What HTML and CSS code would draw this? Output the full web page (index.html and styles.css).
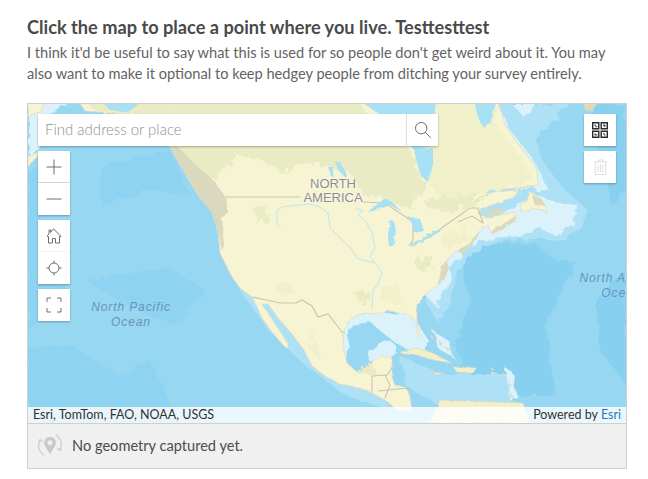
FILE: index.html
```html
<!DOCTYPE html>
<html lang="en">
<head>
<meta charset="utf-8">
<title>Map question</title>
<link rel="stylesheet" href="styles.css">
</head>
<body>
<main class="question">
  <h1 class="title">Click the map to place a point where you live. Testtesttest</h1>
  <p class="desc">I think it'd be useful to say what this is used for so people don't get weird about it. You may also want to make it optional to keep hedgey people from ditching your survey entirely.</p>
  <section class="mapbox">
    <div class="map">
      <svg class="basemap" viewBox="28 104 598 319" preserveAspectRatio="none" aria-hidden="true">
        <defs>
          <filter id="soft" x="-5%" y="-5%" width="110%" height="110%">
            <feTurbulence type="fractalNoise" baseFrequency="0.09" numOctaves="2" seed="4" result="n"/>
            <feDisplacementMap in="SourceGraphic" in2="n" scale="9" result="d"/>
            <feGaussianBlur in="d" stdDeviation="0.7"/>
          </filter>
          <filter id="rough" x="-5%" y="-5%" width="110%" height="110%">
            <feTurbulence type="fractalNoise" baseFrequency="0.2" numOctaves="2" seed="7" result="n"/>
            <feDisplacementMap in="SourceGraphic" in2="n" scale="3" result="d"/>
            <feGaussianBlur in="d" stdDeviation="0.3"/>
          </filter>
          <filter id="mottle" x="-5%" y="-5%" width="110%" height="110%">
            <feTurbulence type="fractalNoise" baseFrequency="0.14" numOctaves="3" seed="11" result="n"/>
            <feDisplacementMap in="SourceGraphic" in2="n" scale="16"/>
          </filter>
        </defs>
        <rect class="ocean" x="28" y="104" width="598" height="319"/>
        <g class="soft">
          <path class="deep-soft" d="M28 170L60 160 40 230 70 300 28 330ZM28 350L70 345 120 375 150 360 180 423H28ZM100 165L170 150 190 195 150 190 100 205ZM85 280L170 268 205 290 175 325 125 305Z"/>
          <path class="deep" d="M458 255L500 243 535 243 552 258 575 262 560 295 545 325 555 395 505 395 470 385 455 345 470 300ZM595 300L626 270V385L600 350ZM590 104H626V190L612 205 600 160Z"/>
          <path class="shelf2" d="M497 104H570L555 120 535 140 545 165 565 190 588 210 580 228 558 242 520 238 496 242 475 252 458 268 450 298 440 325 425 300ZM400 356L440 374 505 374 514 404 440 406 405 385ZM205 190L222 245 240 290 268 330 305 365 345 395 395 412 380 395 330 370 300 340 265 300 235 280 225 250 218 205Z"/>
          <path class="shelf1" d="M28 104H70L42 118 38 150 28 165ZM340 325L355 312 412 314 428 340 425 352 405 348 392 340 370 322 350 325 346 360 342 355ZM517 205L540 196 560 203 577 205 574 225 556 236 540 228 518 236 492 238 470 246 454 260 448 285 436 306 425 295 440 268 470 230Z"/>
          <path class="shelf1" d="M497 104L510 130 530 155 542 175 548 190 535 190 520 150 500 125ZM512 104H535L525 118ZM432 330L448 340 454 358 440 350ZM505 368L512 372 518 398 510 400ZM367 350L390 340 396 346 392 360 370 362Z"/>
        </g>
        <g class="coast rough">
          <path id="land" d="M78 100L85 111 120 114 150 116 160 135 170 147 180 165 192 185 200 198 212 212 218 230 220 253 226 265 232 277 240 288 252 297 256 305 262 318 272 332 284 346 288 349 287 342 276 325 266 310 262 304 268 304 278 318 292 334 304 350 312 366 325 376 340 384 360 388 372 393 385 400 397 410 412 410 409 393 405 387 395 385 392 378 392 358 382 356 373 360 370 370 357 372 347 363 343 347 344 330 348 322 357 315 367 313 380 314 390 311 403 313 413 318 420 332 422 338 417 332 417 305 427 293 438 285 442 267 453 253 467 247 483 228 488 225 490 232 505 225 517 217 514 212 500 215 490 218 478 214 480 209 495 204 515 197 518 190 493 192 473 202 467 207 490 190 517 188 538 185 537 170 527 155 515 140 505 125 497 100Z"/>
          <path d="M28 100H47L40 112 28 116ZM28 157L36 153 44 150 34 160 28 166Z"/>
          <path d="M520 205L527 200 530 192 536 195 545 205 547 212 535 208 522 212Z"/>
        </g>
        <g class="islands">
          <path d="M400 352L417 348 433 353 452 363 433 360 417 355 403 354Z"/>
          <path d="M453 367L477 368 473 373 457 372ZM433 372L442 373 437 375ZM490 372L497 373 492 374ZM440 400L523 403 530 423H430Z"/>
        </g>
        <path class="tan" d="M583 104H597L593 110 586 111ZM430 335L434 337 433 340ZM438 340L442 343 440 346ZM444 346L452 351 447 350ZM502 372L506 375 505 379ZM508 380L511 385 510 388ZM510 392L513 396 511 398ZM491 368L495 370 492 371ZM490 232L500 226 517 215 515 221 503 229 492 234ZM484 212L498 208 505 212 490 216ZM532 195L540 197 546 206 535 205Z"/>
        <g class="mottled">
          <path class="canada" d="M85 100H358L368 115 395 135 410 150 418 170 426 190 405 208 385 198 365 196 350 172 330 168 305 162 280 172 262 160 238 155 222 170 205 190 190 172 170 147 150 116 120 114 95 111Z"/>
          <path class="canada-soft" d="M395 100H490L497 125 515 150 527 165 530 183 500 188 470 200 440 205 430 180 425 150 410 115Z"/>
          <path class="canada" d="M354 173L372 168 400 172 412 182 398 196 378 192 362 195ZM417 258L432 256 434 268 424 272 416 267ZM355 292L370 290 370 303 358 303ZM254 208L266 205 268 222 258 224ZM360 365L372 362 376 372 362 376ZM425 200L465 196 480 192 470 205 444 212 428 208Z"/>
          <path class="canada-soft" d="M378 288L400 286 402 302 385 303ZM273 284L290 284 295 295 280 293ZM312 330L318 345 322 362 310 350ZM440 238L468 225 470 236 444 250Z"/>
        </g>
        <g class="rough">
          <path class="mountains" d="M170 147L178 147 196 165 215 182 226 198 228 212 222 218 224 245 222 252 218 230 212 212 200 198 192 185 180 165Z"/>
          <path class="mountains" d="M438 285L443 265 446 260 449 268 444 280ZM458 250L470 243 480 230 474 244 462 254Z"/>
        </g>
        <g class="borders">
          <path d="M225 197H300M363 202L385 203 413 222 413 240 410 245 430 237 443 227 470 208 478 208 483 223 472 216 458 222"/>
          <path d="M252 297L280 303 296 303 302 300 312 306 318 317 328 314 342 332 345 333"/>
          <path d="M372 376V392M372 376L385 375 390 385 385 398M378 391L408 388M386 376L392 368"/>
        </g>
        <g class="lakes rough">
          <path d="M335 162L340 161 347 175 346 178 340 172ZM328 167L333 167 332 171 334 177 331 176ZM368 212L374 207 385 198 392 202 402 212 390 205 380 209ZM390 220L394 221 396 232 393 246 389 246 388 235ZM408 217L420 219 424 231 414 233 412 224ZM408 245L420 241 430 233 432 235 420 243 412 246ZM428 235L438 230 441 231 432 236Z"/>
          <path d="M414 148L433 148 433 165 428 182 421 176 416 160ZM358 100H436L434 118 428 146 414 150 396 125Z"/>
          <path d="M474 100H497L491 122 484 128 478 118ZM103 103H140L128 112 110 110Z"/>
        </g>
        <g class="rivers">
          <path d="M281 227L277 225 277 210 283 207 290 206 300 205 310 204 320 207 328 213 330 228 340 238 350 247 357 258 366 261 375 263 382 273 378 284 373 290 372 310"/>
          <path d="M355 208L363 211 358 215 366 222 372 232 375 247 370 257 375 263"/>
        </g>
      </svg>

      <div class="label label-continent">NORTH<br>AMERICA</div>
      <div class="label label-pacific">North Pacific<br>Ocean</div>
      <div class="label label-atlantic">North A<br>Oce</div>

      <div class="widgets-left">
        <div class="search">
          <span class="search-input">Find address or place</span>
          <button class="search-btn" type="button" aria-label="Search">
            <svg class="ico" viewBox="0 0 16 16"><circle cx="6.200" cy="6.200" r="5.700"/><path d="M10.300 10.300L15.800 15.800"/></svg>
          </button>
        </div>
        <div class="tool-group">
          <button class="tool tool-line" type="button" aria-label="Zoom in">
            <svg class="ico" viewBox="0 0 16 16"><path d="M8 .5V15.500M.5 8H15.500"/></svg>
          </button>
          <button class="tool" type="button" aria-label="Zoom out">
            <svg class="ico" viewBox="0 0 16 16"><path d="M.5 8H15.500"/></svg>
          </button>
        </div>
        <div class="tool-group">
          <button class="tool tool-faint" type="button" aria-label="Home">
            <svg class="ico" viewBox="0 0 16 16"><path d="M1 8L3 6V2H4.500V4.500L7.500 .8 15 8.500H13.500V15H9.500V10.500H6.500V15H2.500V8.500Z"/></svg>
          </button>
          <button class="tool" type="button" aria-label="Locate">
            <svg class="ico" viewBox="0 0 16 16"><circle cx="8" cy="8" r="5"/><path d="M8 .5V3M8 13V15.500M.5 8H3M13 8H15.500"/></svg>
          </button>
        </div>
        <div class="tool-group">
          <button class="tool" type="button" aria-label="Fullscreen">
            <svg class="ico" viewBox="0 0 16 16"><path d="M1 5V1H5M11 1H15V5M15 11V15H11M5 15H1V11"/></svg>
          </button>
        </div>
      </div>

      <div class="widgets-right">
        <div class="tool-group">
          <button class="tool" type="button" aria-label="Layers">
            <svg class="ico ico-qr" viewBox="0 0 16 16">
              <path d="M.7.7H6.800V6.800H.7ZM9.200.7H15.300V6.800H9.200ZM.7 9.200H6.800V15.300H.7ZM9.200 9.200H15.300V15.300H9.200Z"/>
              <path class="qr-fill" d="M2.500 2.500H4V4H5.200V5.200H3.500V4H2.500ZM13.500 2.500V5H12V4H11V2.500ZM2.500 13.500V11.500H4V12.200H5.500V13.500ZM11 11H12.500V12.300H13.500V13.500H12V12.300H11Z"/>
            </svg>
          </button>
        </div>
        <div class="tool-group">
          <button class="tool" type="button" aria-label="Delete" disabled>
            <svg class="ico ico-trash" viewBox="0 0 16 18"><path d="M1 3H15M5.500 3V1H10.500V3M2.500 3V16.500H13.500V3M5.500 6V14M8 6V14M10.500 6V14"/></svg>
          </button>
        </div>
      </div>

      <div class="attribution">
        <span>Esri, TomTom, FAO, NOAA, USGS</span>
        <span>Powered by <a class="esri" href="#">Esri</a></span>
      </div>
    </div>
    <div class="status">
      <svg class="status-ico" viewBox="0 0 24 24" aria-hidden="true">
        <path class="pin" fill-rule="evenodd" d="M12 4.500C8.600 4.500 6.500 7 6.500 9.800 6.500 13 10 17 12 20.500 14 17 17.500 13 17.500 9.800 17.500 7 15.400 4.500 12 4.500ZM12 7.700A2.300 2.300 0 1 1 12 12.300 2.300 2.300 0 1 1 12 7.700Z"/>
        <path class="loop" d="M17.500 2.700C20.800 4.800 22.800 8 22.500 12 22.300 14 21.700 15.500 20.500 17M6.500 21.300C3.200 19.200 1.200 16 1.500 12 1.700 10 2.300 8.500 3.500 7"/>
        <path class="loop" d="M19 14.500L20.500 17 23 16M5 9.500L3.500 7 1 8"/>
      </svg>
      <span>No geometry captured yet.</span>
    </div>
  </section>
</main>
</body>
</html>
```

FILE: styles.css
```css
* { box-sizing: border-box; }

html, body { margin: 0; background: #fff; }

body {
  font-family: "Lato", "Open Sans", sans-serif;
  color: #4c4c4c;
  overflow: hidden;
}

.question {
  width: 600px;
  margin-left: 27px;
  padding-top: 16px;
}

.title {
  margin: 0;
  font-size: 18.200px;
  line-height: 22px;
  font-weight: 700;
  color: #4a4a4a;
}

.desc {
  margin: 4px 0 0;
  width: 590px;
  font-size: 14.600px;
  line-height: 21px;
  color: #636363;
}

.mapbox {
  margin-top: 19px;
  border: 1px solid #cfcfcf;
}

.map {
  position: relative;
  height: 319px;
  overflow: hidden;
  background: #93d5f1;
}

.basemap {
  position: absolute;
  inset: 0;
  width: 100%;
  height: 100%;
  display: block;
}

.ocean { fill: #97d7f2; }
.soft { filter: url(#soft); }
.deep { fill: #88d0f0; }
.deep-soft { fill: #8ed3f1; }
.shelf2 { fill: #aee0f6; }
.shelf1 { fill: #dcf2fb; }

.rough { filter: url(#rough); }

.coast path {
  fill: #f6f4d3;
  stroke: #e0ddc2;
  stroke-width: .8;
  stroke-linejoin: round;
}

.islands { filter: url(#rough); }
.islands path { fill: #f2efca; stroke: #dcd9bd; stroke-width: .6; }

.tan { fill: #dcd9bd; filter: url(#rough); }

.mottled { filter: url(#mottle); }
.canada { fill: #e8ebc3; }
.canada-soft { fill: #f0f0cb; }

.mountains { fill: #dad8bd; }

.borders path {
  fill: none;
  stroke: #cbc5ad;
  stroke-width: 1.100;
}

.lakes path { fill: #a8e0f6; }

.rivers path {
  fill: none;
  stroke: #aee2f5;
  stroke-width: .8;
}

.label {
  position: absolute;
  text-align: center;
  white-space: nowrap;
}

.label-continent {
  left: 270px;
  top: 73px;
  width: 70px;
  font: 400 13px/14px "Liberation Sans", sans-serif;
  color: #8c8c8c;
  text-shadow: 0 0 2px #fff, 0 0 1px #fff;
}

.label-pacific {
  left: 53px;
  top: 196px;
  width: 100px;
  font: italic 400 12px/15px "Liberation Sans", sans-serif;
  letter-spacing: .9px;
  color: #6a92bd;
}

.label-atlantic {
  left: 549px;
  top: 167px;
  width: 49px;
  text-align: right;
  font: italic 400 12px/15px "Liberation Sans", sans-serif;
  letter-spacing: .9px;
  color: #6a92bd;
}

.widgets-left,
.widgets-right {
  position: absolute;
  top: 10px;
  display: flex;
  flex-direction: column;
  gap: 5px;
}

.widgets-left { left: 10px; }
.widgets-right { right: 10px; }

.search {
  display: flex;
  width: 400px;
  height: 32px;
  background: #fff;
  box-shadow: 0 1px 2px rgba(0, 0, 0, .3);
}

.search-input {
  flex: 1;
  padding-left: 7px;
  font-size: 15px;
  font-weight: 300;
  line-height: 30px;
  color: #8f8f8f;
}

.search-btn {
  width: 32px;
  height: 32px;
  padding: 0;
  border: 0;
  border-left: 1px solid #dcdcdc;
  background: #fff;
  display: flex;
  align-items: center;
  justify-content: center;
}

.tool-group {
  width: 32px;
  display: flex;
  flex-direction: column;
  background: #fff;
  box-shadow: 0 1px 2px rgba(0, 0, 0, .3);
}

.tool {
  width: 32px;
  height: 32px;
  padding: 0;
  border: 0;
  background: #fff;
  display: flex;
  align-items: center;
  justify-content: center;
}

.tool-line { border-bottom: 1px solid #d4d4d4; }
.tool-faint { border-bottom: 1px solid #f5f5f5; }

.ico {
  width: 16px;
  height: 16px;
  fill: none;
  stroke: #6e6e6e;
  stroke-width: 1;
}

.ico-qr { stroke: #2b2b2b; stroke-width: 1.400; }
.qr-fill { fill: #555; stroke: none; }

.ico-trash {
  width: 15px;
  height: 17px;
  stroke: #dcdcdc;
}

.attribution {
  position: absolute;
  left: 0;
  right: 0;
  bottom: 0;
  height: 16px;
  padding: 0 5px;
  display: flex;
  justify-content: space-between;
  align-items: center;
  background: rgba(255, 255, 255, .8);
  font-size: 12.500px;
  line-height: 16px;
  color: #323232;
}

.esri { color: #2a78c2; text-decoration: none; }

.status {
  height: 45px;
  padding-bottom: 2px;
  border-top: 1px solid #cfcfcf;
  background: #f0f0f0;
  display: flex;
  align-items: center;
  gap: 9px;
  padding-left: 9px;
  font-size: 14.600px;
  color: #4c4c4c;
}

.status-ico { width: 26px; height: 26px; flex: none; }
.pin { fill: #c9c9c9; }
.loop { fill: none; stroke: #d0d0d0; stroke-width: 1.300; }
```
